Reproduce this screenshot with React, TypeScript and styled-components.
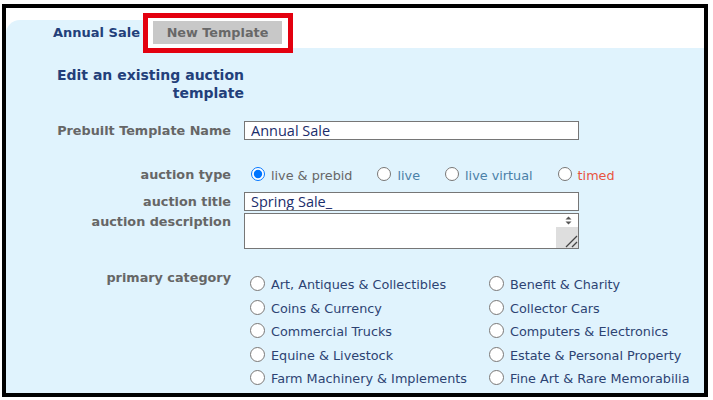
import { createGlobalStyle, styled } from 'styled-components';

const GlobalStyle = createGlobalStyle`
  html, body {
    margin: 0;
    padding: 0;
    background: #ffffff;
  }
  body {
    font-family: "DejaVu Sans", Verdana, sans-serif;
  }
`;

const auctionTypes = [
  { label: 'live & prebid', color: '#666666', checked: true },
  { label: 'live', color: '#4a80a8', checked: false },
  { label: 'live virtual', color: '#4a80a8', checked: false },
  { label: 'timed', color: '#e8533f', checked: false },
];

const categories = [
  'Art, Antiques & Collectibles',
  'Benefit & Charity',
  'Coins & Currency',
  'Collector Cars',
  'Commercial Trucks',
  'Computers & Electronics',
  'Equine & Livestock',
  'Estate & Personal Property',
  'Farm Machinery & Implements',
  'Fine Art & Rare Memorabilia',
];

const App = () => {
  return (
    <>
      <GlobalStyle />
      <Frame>
        <TabBar>
          <ActiveTab>Annual Sale</ActiveTab>
          <InactiveTab>New Template</InactiveTab>
          <Highlight />
        </TabBar>

        <Panel>
          <Heading>Edit an existing auction template</Heading>

          <Row $top={19}>
            <Label>Prebuilt Template Name</Label>
            <TextInput defaultValue="Annual Sale" />
          </Row>

          <Row $top={25}>
            <Label>auction type</Label>
            <Options>
              {auctionTypes.map((t) => (
                <Option key={t.label} $color={t.color}>
                  <Radio name="atype" defaultChecked={t.checked} />
                  {t.label}
                </Option>
              ))}
            </Options>
          </Row>

          <Row $top={7}>
            <Label>auction title</Label>
            <TextInput defaultValue="Spring Sale_" />
          </Row>

          <Row $top={2} $align="flex-start">
            <Label>auction description</Label>
            <DescBox>
              <DescArea />
              <ScrollCol>
                <ScrollArrows>
                  <svg width="7" height="9" viewBox="0 0 7 9">
                    <path d="M3.5 0.5 L6.5 3.5 L0.5 3.5 Z" fill="#555" />
                    <path d="M0.5 5.5 L6.5 5.5 L3.5 8.5 Z" fill="#555" />
                  </svg>
                </ScrollArrows>
                <ScrollGrip>
                  <svg width="13" height="13" viewBox="0 0 13 13">
                    <path d="M1 12 L12 1" stroke="#444" strokeWidth="1.3" />
                    <path d="M7 12 L12 7" stroke="#444" strokeWidth="1.3" />
                  </svg>
                </ScrollGrip>
              </ScrollCol>
            </DescBox>
          </Row>

          <Row $top={20} $align="flex-start">
            <Label>primary category</Label>
            <CategoryGrid>
              {categories.map((c) => (
                <Category key={c}>
                  <Radio name="cat" $size={15} />
                  {c}
                </Category>
              ))}
            </CategoryGrid>
          </Row>
        </Panel>
      </Frame>
    </>
  );
};

const Frame = styled.div`
  position: relative;
  box-sizing: border-box;
  display: flex;
  flex-direction: column;
  width: 706px;
  height: 393px;
  margin: 4px 0 0 2px;
  border: 4px solid #000000;
  background: #ffffff;
  overflow: hidden;
`;

const TabBar = styled.div`
  position: relative;
  display: flex;
  align-items: flex-start;
  height: 28px;
  margin-top: 12px;
  flex-shrink: 0;
`;

const ActiveTab = styled.div`
  box-sizing: border-box;
  width: 140px;
  height: 28px;
  padding-left: 47px;
  border-top-left-radius: 14px;
  background: #e0f3fd;
  color: #233f7a;
  font-size: 13px;
  font-weight: bold;
  line-height: 26px;
  white-space: nowrap;
`;

const InactiveTab = styled.div`
  width: 129px;
  height: 23px;
  margin: 1px 0 0 7px;
  background: #c8c8c8;
  color: #686868;
  font-size: 12.8px;
  font-weight: bold;
  line-height: 23px;
  text-align: center;
`;

const Highlight = styled.div`
  position: absolute;
  left: 137px;
  top: -7px;
  box-sizing: border-box;
  width: 150px;
  height: 40px;
  border: 5px solid #e3000f;
  pointer-events: none;
`;

const Panel = styled.div`
  flex: 1;
  padding-top: 18px;
  background: #e0f3fd;
`;

const Heading = styled.h2`
  width: 238px;
  margin: 0;
  color: #233f7a;
  font-size: 14px;
  font-weight: bold;
  line-height: 18px;
  text-align: right;
`;

const Row = styled.div<{ $top: number; $align?: string }>`
  display: flex;
  align-items: ${(p) => p.$align || 'center'};
  margin-top: ${(p) => p.$top}px;
`;

const Label = styled.label`
  flex-shrink: 0;
  width: 225px;
  margin-right: 13px;
  color: #666666;
  font-size: 12.8px;
  font-weight: bold;
  line-height: 18px;
  text-align: right;
  white-space: nowrap;
`;

const TextInput = styled.input`
  box-sizing: border-box;
  width: 335px;
  height: 19px;
  padding: 0 6px;
  border: 1px solid #767676;
  border-radius: 0;
  background: #ffffff;
  color: #1b2d6b;
  font-family: "Open Sans", "Noto Sans", sans-serif;
  font-size: 14.5px;
  line-height: 17px;
  outline: none;
`;

const Options = styled.div`
  display: flex;
  align-items: center;
  gap: 25px;
  height: 20px;
  padding-left: 7px;
`;

const Option = styled.label<{ $color: string }>`
  display: inline-flex;
  align-items: center;
  gap: 6px;
  color: ${(p) => p.$color};
  font-size: 12.8px;
  white-space: nowrap;
`;

const Radio = styled.input.attrs({ type: 'radio' })<{ $size?: number }>`
  flex-shrink: 0;
  width: ${(p) => p.$size || 14}px;
  height: ${(p) => p.$size || 14}px;
  margin: 0 0 2px 0;
  accent-color: #0075ff;
`;

const DescBox = styled.div`
  box-sizing: border-box;
  display: flex;
  width: 335px;
  height: 36px;
  border: 1px solid #767676;
  background: #ffffff;
`;

const DescArea = styled.textarea`
  flex: 1;
  border: none;
  resize: none;
  outline: none;
  background: transparent;
  font-family: "Open Sans", sans-serif;
  font-size: 14px;
`;

const ScrollCol = styled.div`
  display: flex;
  flex-direction: column;
  width: 22px;
`;

const ScrollArrows = styled.div`
  display: flex;
  justify-content: center;
  align-items: center;
  height: 13px;
  padding-left: 2px;
`;

const ScrollGrip = styled.div`
  flex: 1;
  display: flex;
  justify-content: flex-end;
  align-items: flex-end;
  background: #dedede;
`;

const CategoryGrid = styled.div`
  display: grid;
  grid-template-columns: 239px auto;
  grid-auto-rows: 23.5px;
  padding: 4px 0 0 6px;
`;

const Category = styled.label`
  display: flex;
  align-items: center;
  gap: 6px;
  color: #2d4373;
  font-size: 12.8px;
  white-space: nowrap;
`;

export default App;
